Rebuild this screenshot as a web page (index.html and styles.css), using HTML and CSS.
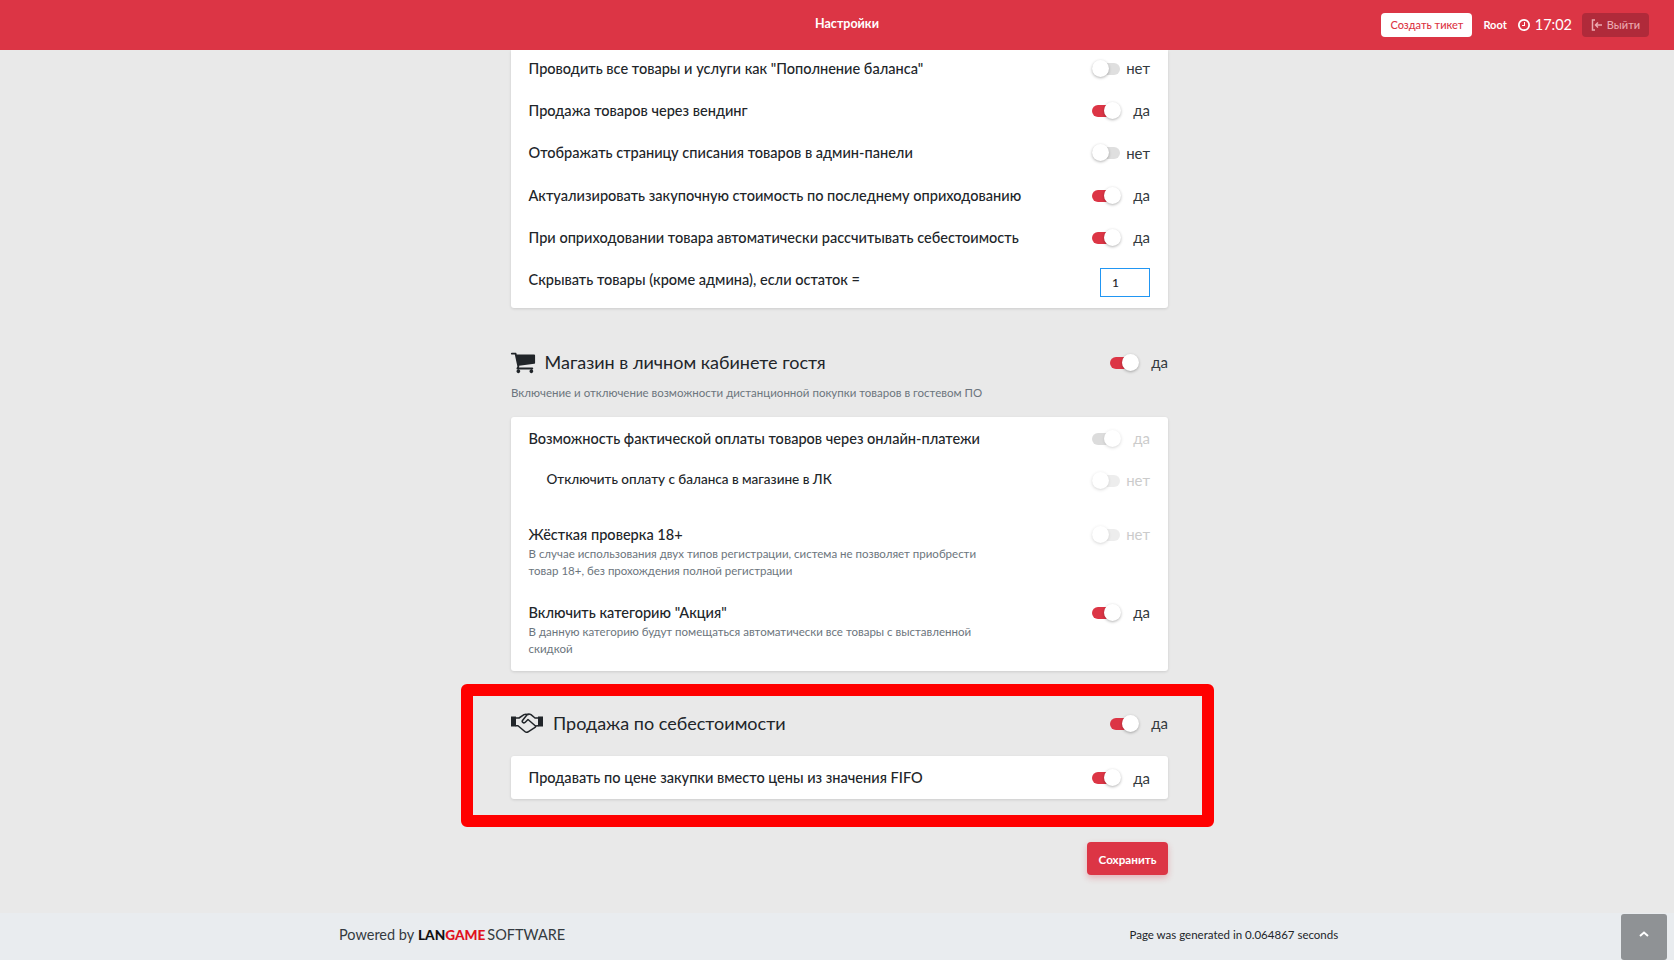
FILE: index.html
```html
<!DOCTYPE html>
<html lang="ru">
<head>
<meta charset="utf-8">
<title>Настройки</title>
<link rel="stylesheet" href="styles.css">
</head>
<body>
<header class="topbar">
  <div class="topbar-title">Настройки</div>
  <div class="topbar-right">
    <a class="btn-ticket">Создать тикет</a>
    <span class="user">Root</span>
    <span class="clock"><svg class="clock-icon" viewBox="0 0 1792 1792"><path fill="currentColor" d="M1024 544v448q0 14-9 23t-23 9h-320q-14 0-23-9t-9-23v-64q0-14 9-23t23-9h224v-352q0-14 9-23t23-9h64q14 0 23 9t9 23zm416 352q0-148-73-273t-198-198-273-73-273 73-198 198-73 273 73 273 198 198 273 73 273-73 198-198 73-273zm224 0q0 209-103 385.500t-279.500 279.500-385.500 103-385.500-103-279.500-279.500-103-385.500 103-385.500 279.500-279.500 385.500-103 385.500 103 279.500 279.500 103 385.500z"/></svg>17:02</span>
    <a class="btn-logout"><svg class="logout-icon" viewBox="0 0 12 12"><path d="M4 1H1.500v10H4M11 6H4.500M7 3.500L4.500 6 7 8.500" fill="none" stroke="currentColor" stroke-width="1.500"/></svg>Выйти</a>
  </div>
</header>

<main class="content">
  <section class="card card-top">
    <div class="row"><span class="label">Проводить все товары и услуги как "Пополнение баланса"</span><span class="switch"><i class="track"></i><b class="state">нет</b></span></div>
    <div class="row"><span class="label">Продажа товаров через вендинг</span><span class="switch on"><i class="track"></i><b class="state">да</b></span></div>
    <div class="row"><span class="label">Отображать страницу списания товаров в админ-панели</span><span class="switch"><i class="track"></i><b class="state">нет</b></span></div>
    <div class="row"><span class="label">Актуализировать закупочную стоимость по последнему оприходованию</span><span class="switch on"><i class="track"></i><b class="state">да</b></span></div>
    <div class="row"><span class="label">При оприходовании товара автоматически рассчитывать себестоимость</span><span class="switch on"><i class="track"></i><b class="state">да</b></span></div>
    <div class="row row-input"><span class="label label-input">Скрывать товары (кроме админа), если остаток =</span><input class="num" type="text" value="1"></div>
  </section>

  <section class="group">
    <div class="group-head">
      <svg class="cart-icon" viewBox="0 0 1792 1792"><path fill="currentColor" d="M704 1536q0 52-38 90t-90 38-90-38-38-90 38-90 90-38 90 38 38 90zm896 0q0 52-38 90t-90 38-90-38-38-90 38-90 90-38 90 38 38 90zm128-1088v512q0 24-16.500 42.500t-40.500 21.500l-1044 122q13 60 13 70 0 16-24 64h920q26 0 45 19t19 45-19 45-45 19h-1024q-26 0-45-19t-19-45q0-11 8-31.500t16-36 21.500-40 15.500-29.500l-177-823h-204q-26 0-45-19t-19-45 19-45 45-19h256q16 0 28.500 6.500t19.500 15.500 13 24.500 8 26 5.500 29.500 4.500 26h1201q26 0 45 19t19 45z"/></svg>
      <h2 class="group-title">Магазин в личном кабинете гостя</h2>
      <span class="switch on"><i class="track"></i><b class="state">да</b></span>
    </div>
    <p class="group-desc">Включение и отключение возможности дистанционной покупки товаров в гостевом ПО</p>
    <div class="card">
      <div class="row row-a"><span class="label">Возможность фактической оплаты товаров через онлайн-платежи</span><span class="switch on disabled"><i class="track"></i><b class="state">да</b></span></div>
      <div class="row row-b"><span class="label sub">Отключить оплату с баланса в магазине в ЛК</span><span class="switch disabled"><i class="track"></i><b class="state">нет</b></span></div>
      <div class="row row-text"><div class="text-col"><span class="label">Жёсткая проверка 18+</span><small class="hint">В случае использования двух типов регистрации, система не позволяет приобрести товар 18+, без прохождения полной регистрации</small></div><span class="switch disabled"><i class="track"></i><b class="state">нет</b></span></div>
      <div class="row row-text row-last"><div class="text-col"><span class="label">Включить категорию "Акция"</span><small class="hint">В данную категорию будут помещаться автоматически все товары с выставленной скидкой</small></div><span class="switch on"><i class="track"></i><b class="state">да</b></span></div>
    </div>
  </section>

  <section class="group group-marked">
    <div class="group-head">
      <svg class="hand-icon" viewBox="0 0 32 20"><g fill="none" stroke="currentColor" stroke-width="1.500" stroke-linejoin="round" stroke-linecap="round"><path d="M5 5h3l5-3.300c1.500-.8 3-.5 4 0"/><path d="M27 5h-3l-4-3.300c-1.500-1-3-1-4 0l-4.500 5.800c-1 1.500 1 3 2.500 2l3-3 7.500 6.500"/><path d="M27 12.700l-2.500.3c.3.700 0 1.200-.8 1.700l-6.200 4c-1.500 1-3 .5-4-.5l-6.500-5.500H5"/></g><rect x="0" y="3.500" width="5" height="10" fill="currentColor"/><rect x="27" y="3.500" width="5" height="10" fill="currentColor"/></svg>
      <h2 class="group-title">Продажа по себестоимости</h2>
      <span class="switch on"><i class="track"></i><b class="state">да</b></span>
    </div>
    <div class="card">
      <div class="row"><span class="label">Продавать по цене закупки вместо цены из значения FIFO</span><span class="switch on"><i class="track"></i><b class="state">да</b></span></div>
    </div>
  </section>

  <div class="actions"><button class="btn-save" type="button">Сохранить</button></div>
</main>

<footer class="footer">
  <div class="powered">Powered by <span class="logo"><span class="logo-lan">LAN</span><span class="logo-game">GAME</span></span> SOFTWARE</div>
  <div class="generated">Page was generated in 0.064867 seconds</div>
  <a class="to-top"><svg class="to-top-icon" viewBox="0 0 10 6"><path d="M1 5l4-3.500L9 5" fill="none" stroke="currentColor" stroke-width="2"/></svg></a>
</footer>
</body>
</html>
```
FILE: styles.css
```css
* { box-sizing: border-box; }
html, body { margin: 0; height: 960px; overflow: hidden; }
body {
  display: flex;
  flex-direction: column;
  background: #e9e9e9;
  font-family: Lato, "Noto Sans", "Liberation Sans", sans-serif;
  color: #212529;
}
.topbar {
  height: 50px;
  flex: none;
  background: #dc3545;
  color: #fff;
  display: flex;
  align-items: center;
  justify-content: center;
  position: relative;
}
.topbar-title { font-size: 12.500px; font-weight: 700; margin: 0 0 4px 20px; }
.topbar-right {
  position: absolute;
  right: 25px;
  top: 13px;
  display: flex;
  align-items: center;
  height: 24px;
}
.btn-ticket {
  width: 91px;
  height: 24px;
  padding-bottom: 1px;
  border-radius: 4px;
  background: #fff;
  color: #dc3545;
  font-size: 11px;
  font-weight: 500;
  display: flex;
  align-items: center;
  justify-content: center;
}
.user { font-size: 11px; font-weight: 700; margin: 0 0 1px 11px; }
.clock { font-size: 14.500px; display: flex; align-items: center; margin-left: 10px; margin-top: -1px; }
.clock-icon { width: 14px; height: 14px; margin-right: 4px; }
.btn-logout {
  width: 67px;
  height: 24px;
  padding-bottom: 1px;
  margin-left: 10px;
  border-radius: 4px;
  background: #b02a3a;
  color: #eba9b1;
  font-size: 11px;
  font-weight: 500;
  display: flex;
  align-items: center;
  justify-content: center;
}
.logout-icon { width: 12px; height: 12px; margin-right: 4px; }

.content {
  flex: 1;
  width: 657px;
  margin-left: 511px;
  display: flex;
  flex-direction: column;
}
.card {
  background: #fff;
  border-radius: 0 0 3px 3px;
  box-shadow: 0 1px 3px rgba(0, 0, 0, .12);
  padding: 0 18px 0 17.500px;
}
.row {
  height: 42.300px;
  display: flex;
  align-items: center;
  justify-content: space-between;
}
.card-top .row:first-child { height: 39.300px; padding-bottom: 3.300px; }
.row-input { height: 50px; padding-bottom: 6px; align-items: center; }
.label { font-size: 14.560px; font-weight: 500; color: #212529; }
.label-input { margin-bottom: 1px; }
.label.sub { font-size: 13.500px; margin-left: 18px; }
.switch { display: flex; align-items: center; width: 58px; flex: none; }
.track {
  position: relative;
  width: 28px;
  height: 12px;
  margin-top: 1px;
  border-radius: 6px;
  background: #dfdfdf;
  display: block;
}
.track::after {
  content: "";
  position: absolute;
  left: 0;
  top: -3px;
  width: 17px;
  height: 17px;
  border-radius: 50%;
  background: #fff;
  box-shadow: 0 1px 3px rgba(0, 0, 0, .3);
}
.on .track { background: #dc3545; }
.on .track::after { left: 12px; }
.state { font-size: 15px; font-weight: 400; margin-left: auto; color: #343a40; }
.disabled { opacity: .5; }
.disabled .state { color: #999; }
.disabled .track { background: #bbb; }
.switch.disabled:not(.on) .track { background: #ddd; }
.num {
  width: 50px;
  height: 29px;
  border: 1px solid #2196f3;
  background: #fff;
  padding: 0 11px;
  font: 500 12px Lato, "Noto Sans", sans-serif;
  color: #212529;
  outline: none;
  margin-top: 5px;
}

.group { display: flex; flex-direction: column; }
.group-head { display: flex; align-items: center; height: 30px; margin-top: 39px; }
.group-title { font-size: 18px; font-weight: 400; margin: 0; flex: 1; color: #212529; }
.cart-icon { width: 26px; height: 26px; margin: 0 8.500px 0 -1px; }
.hand-icon { width: 32px; height: 20px; margin-right: 10px; }
.group-desc { font-size: 11.500px; color: #6c757d; margin: 8px 0 16px; line-height: 16px; }
.group .card { border-radius: 3px; }
.row-a { height: 42px; }
.row-b { height: 55px; align-items: flex-start; padding-top: 12px; }
.row-text { height: 78px; align-items: flex-start; padding-top: 11.700px; }
.row-last { height: 79px; }
.row-text .switch { margin-top: -1px; }
.text-col { display: flex; flex-direction: column; width: 452px; }
.hint { font-size: 11.500px; line-height: 17px; color: #6c757d; margin-top: 2px; }

.group-marked { position: relative; }
.group-marked .group-head { margin-top: 37px; margin-bottom: 18px; }
.group-marked .card { height: 43px; }
.group-marked .row { height: 43px; }
.group-marked::after {
  content: "";
  position: absolute;
  left: -50px;
  right: -46px;
  top: 13px;
  bottom: -28px;
  border: 12px solid #f00;
  border-radius: 6px;
  pointer-events: none;
}
.actions { display: flex; justify-content: flex-end; margin-top: 43px; }
.btn-save {
  width: 81px;
  height: 33px;
  border: 0;
  border-radius: 4px;
  background: #dc3545;
  color: #fff;
  font: 700 11.700px Lato, "Noto Sans", sans-serif;
  box-shadow: 0 3px 6px rgba(220, 53, 69, .3);
}

.footer {
  height: 47px;
  flex: none;
  background: #e9ecef;
  display: flex;
  align-items: center;
  padding: 0 0 4px 339px;
  position: relative;
}
.powered { font-size: 14.500px; color: #343a40; width: 790.500px; }
.logo { font-weight: 900; font-size: 12.500px; line-height: 1; display: inline-block; width: 66px; transform: scaleX(1.090); transform-origin: left center; }
.logo-lan { color: #111; }
.logo-game { color: #e01020; }
.generated { font-size: 11.500px; color: #212529; }
.to-top {
  position: absolute;
  right: 7px;
  bottom: 0;
  width: 46px;
  height: 46px;
  border-radius: 3px;
  background: #8f9295;
  color: #fff;
  display: flex;
  align-items: center;
  justify-content: center;
}
.to-top-icon { width: 10px; height: 6px; margin-bottom: 6px; }
```
